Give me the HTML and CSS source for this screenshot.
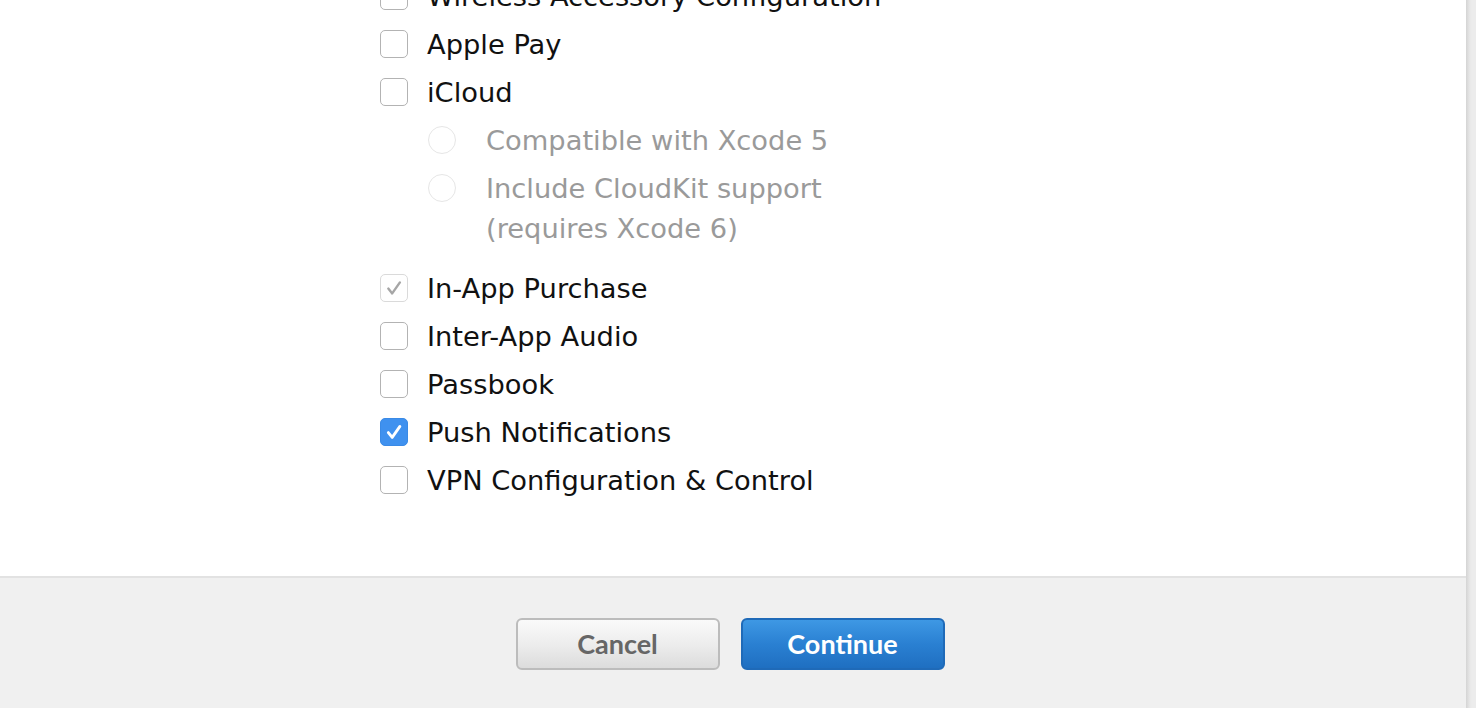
FILE: index.html
```html
<!DOCTYPE html>
<html lang="en">
<head>
<meta charset="utf-8">
<title>Capabilities</title>
<link rel="stylesheet" href="styles.css">
</head>
<body>
<div class="page">
  <div class="panel">
    <div class="content">
      <ul class="list">
        <li class="row"><span class="box"></span><span class="label">Wireless Accessory Configuration</span></li>
        <li class="row"><span class="box"></span><span class="label">Apple Pay</span></li>
        <li class="row"><span class="box"></span><span class="label">iCloud</span></li>
        <li class="sub">
          <ul class="sublist">
            <li class="row"><span class="radio"></span><span class="label muted">Compatible with Xcode 5</span></li>
            <li class="row"><span class="radio"></span><span class="label muted">Include CloudKit support<br>(requires Xcode 6)</span></li>
          </ul>
        </li>
        <li class="row"><span class="box disabled-checked"><svg viewBox="0 0 28 28" width="28" height="28"><path d="M8.3 14.6 L12.2 19.4 L19.9 8.4" fill="none" stroke="#a6a6a6" stroke-width="2.4" stroke-linecap="round" stroke-linejoin="round"/></svg></span><span class="label">In-App Purchase</span></li>
        <li class="row"><span class="box"></span><span class="label">Inter-App Audio</span></li>
        <li class="row"><span class="box"></span><span class="label">Passbook</span></li>
        <li class="row"><span class="box checked"><svg viewBox="0 0 28 28" width="28" height="28"><path d="M8.3 14.6 L12.2 19.4 L19.9 8.4" fill="none" stroke="#ffffff" stroke-width="2.8" stroke-linecap="round" stroke-linejoin="round"/></svg></span><span class="label">Push Notifications</span></li>
        <li class="row"><span class="box"></span><span class="label">VPN Configuration &amp; Control</span></li>
      </ul>
    </div>
    <div class="footer">
      <button class="btn btn-cancel" type="button">Cancel</button>
      <button class="btn btn-continue" type="button">Continue</button>
    </div>
  </div>
  <div class="gutter"></div>
</div>
</body>
</html>
```
FILE: styles.css
```css
* { box-sizing: border-box; }
html, body { margin: 0; padding: 0; }
body {
  width: 1476px;
  height: 708px;
  overflow: hidden;
  background: #ececec;
  font-family: "DejaVu Sans", "Liberation Sans", sans-serif;
}
.page {
  display: flex;
  height: 708px;
}
.panel {
  width: 1466px;
  display: flex;
  flex-direction: column;
  background: #ffffff;
}
.gutter {
  flex: 1;
  background: linear-gradient(to right, #d4d4d4 0, #dedede 2px, #e8e8e8 4px, #ececec 6px);
}
.content {
  height: 578px;
  overflow: hidden;
  padding-left: 380px;
  border-bottom: 2px solid #e2e2e2;
}
.list, .sublist {
  list-style: none;
  margin: 0;
  padding: 0;
}
.list { margin-top: -28px; }
.row {
  display: flex;
  align-items: flex-start;
  padding: 5px 0 3px;
  line-height: 40px;
  font-size: 27.3px;
  color: #111111;
}
.sub { margin-bottom: 12px; }
.sublist { padding-left: 48px; }
.box {
  flex: none;
  width: 28px;
  height: 28px;
  margin-top: 5px;
  margin-right: 19px;
  border: 1.5px solid #b3b3b3;
  border-radius: 5px;
  background: #ffffff;
  position: relative;
}
.box svg {
  position: absolute;
  left: -1.5px;
  top: -1.5px;
}
.box.disabled-checked {
  border-color: #dadada;
}
.box.checked {
  border-color: #3a8ae6;
  background: #3f91ef;
}
.radio {
  flex: none;
  width: 28px;
  height: 28px;
  margin-top: 5px;
  margin-right: 30px;
  border: 1.5px solid #e6e6e6;
  border-radius: 50%;
  background: #ffffff;
}
.label { white-space: nowrap; }
.muted { color: #9a9a9a; }
.footer {
  flex: 1;
  background: #f0f0f0;
  display: flex;
  justify-content: center;
  align-items: flex-start;
  gap: 21px;
  padding-top: 40px;
  padding-right: 6px;
}
.btn {
  width: 204px;
  height: 52px;
  border-radius: 6px;
  font-family: Lato, "Liberation Sans", sans-serif;
  font-weight: 700;
  font-size: 27px;
  line-height: 48px;
  padding: 0;
  cursor: pointer;
}
.btn-cancel {
  color: #666666;
  border: 2px solid #bcbcbc;
  background: linear-gradient(to bottom, #fafafa 0%, #ededed 50%, #dcdcdc 100%);
}
.btn-continue {
  color: #ffffff;
  border: 2px solid #1f6ab8;
  background: linear-gradient(to bottom, #3e98e4 0%, #2a80d2 50%, #1f6fc1 100%);
}
```
